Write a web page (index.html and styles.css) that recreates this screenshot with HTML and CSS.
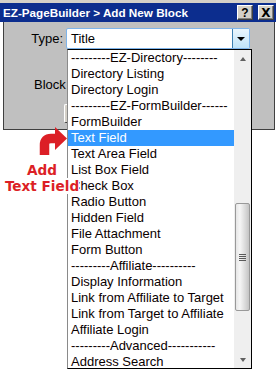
FILE: index.html
```html
<!DOCTYPE html>
<html>
<head>
<meta charset="utf-8">
<link rel="stylesheet" href="styles.css">
</head>
<body>
<div class="window">
  <div class="titlebar">
    <span class="title">EZ-PageBuilder &gt; Add New Block</span>
    <div class="tbtns">
      <span class="tbtn">?</span>
      <span class="tbtn close">X</span>
    </div>
  </div>
  <div class="panel">
    <div class="row">
      <span class="lbl">Type:</span>
      <div class="select"><span>Title</span><span class="dbtn"><span class="tri-down"></span></span></div>
    </div>
    <div class="row2"><span class="clip">Block Name:</span></div>
    <div class="pbtn"></div>
  </div>
</div>

<div class="list">
  <div class="items">
    <div class="item">---------EZ-Directory--------</div>
    <div class="item">Directory Listing</div>
    <div class="item">Directory Login</div>
    <div class="item">---------EZ-FormBuilder------</div>
    <div class="item">FormBuilder</div>
    <div class="item sel">Text Field</div>
    <div class="item">Text Area Field</div>
    <div class="item">List Box Field</div>
    <div class="item">Check Box</div>
    <div class="item">Radio Button</div>
    <div class="item">Hidden Field</div>
    <div class="item">File Attachment</div>
    <div class="item">Form Button</div>
    <div class="item">---------Affiliate----------</div>
    <div class="item">Display Information</div>
    <div class="item">Link from Affiliate to Target</div>
    <div class="item">Link from Target to Affiliate</div>
    <div class="item">Affiliate Login</div>
    <div class="item">---------Advanced-----------</div>
    <div class="item">Address Search</div>
  </div>
  <div class="scroll">
    <div class="sb-btn"><span class="tri-up"></span></div>
    <div class="sb-track">
      <div class="thumb"><span class="grip"></span></div>
    </div>
    <div class="sb-btn"><span class="tri-dn"></span></div>
  </div>
</div>

<svg class="arrow" width="70" height="45" viewBox="0 120 70 45">
  <path d="M44.5 155 V145 Q44.5 138.5 51 138.5 H56" fill="none" stroke="#dc1f26" stroke-width="9.5"/>
  <polygon points="55,127 67,138.5 55,150" fill="#dc1f26"/>
</svg>
<div class="annot"><span>Add</span><br><span class="bg">Text Field</span></div>
</body>
</html>
```

FILE: styles.css
```css
* { box-sizing: border-box; }
body {
  margin: 0;
  background: #fff;
  width: 278px;
  height: 375px;
  position: relative;
  overflow: hidden;
  font-family: "Liberation Sans", Arial, sans-serif;
  color: #000;
}
.window {
  width: 276px;
  border-top: 3px solid #d4d0c8;
}
.titlebar {
  height: 19px;
  background: #0c2d8e;
  display: flex;
  align-items: center;
  justify-content: space-between;
  padding: 0 2px 0 3px;
}
.title {
  color: #fff;
  font-weight: bold;
  font-size: 11.7px;
  white-space: nowrap;
}
.tbtns { display: flex; gap: 5px; }
.tbtn {
  width: 16px;
  height: 15px;
  background: #d4d0c8;
  border: 1px solid;
  border-color: #fff #404040 #404040 #fff;
  box-shadow: inset -1px -1px #808080;
  display: flex;
  align-items: center;
  justify-content: center;
  font: bold 12px "Liberation Sans", Arial, sans-serif;
  color: #000;
  line-height: 1;
}
.tbtn.close { font: bold 12px "DejaVu Sans", sans-serif; }
.panel {
  margin-left: 3px;
  width: 272px;
  height: 108px;
  background: #c0c0c0;
  border: 1px solid #404040;
  border-top: none;
  padding-top: 6px;
}
.row { display: flex; align-items: center; }
.lbl {
  width: 59px;
  text-align: right;
  font-size: 13px;
}
.select {
  margin-left: 3px;
  width: 184px;
  height: 21px;
  background: #fff;
  border: 1px solid #7eb4ea;
  border-radius: 2px;
  display: flex;
  align-items: center;
  justify-content: space-between;
  padding-left: 4px;
  font-size: 13px;
}
.dbtn {
  width: 17px;
  height: 19px;
  background: linear-gradient(#eaf6fd, #bfe3f8);
  border-left: 1px solid #3c7fb1;
  display: flex;
  align-items: center;
  justify-content: center;
}
.tri-down {
  width: 0; height: 0;
  border-left: 4px solid transparent;
  border-right: 4px solid transparent;
  border-top: 4px solid #000;
}
.row2 {
  margin-top: 28px;
  padding-left: 30px;
  font-size: 13px;
  line-height: 16px;
  height: 16px;
}
.row2 .clip {
  display: block;
  width: 33px;
  overflow: hidden;
  white-space: nowrap;
}
.pbtn {
  margin-top: 11px;
  margin-left: 60px;
  width: 80px;
  height: 19px;
  background: #d4d0c8;
  border: 1px solid;
  border-color: #fff #404040 #404040 #fff;
  border-radius: 2px;
}
.list {
  position: absolute;
  left: 67px;
  top: 49px;
  width: 185px;
  height: 320px;
  background: #fff;
  border: 1px solid #000;
  border-left-color: #8a8a8a;
  display: flex;
}
.items { width: 166px; overflow: hidden; }
.item {
  height: 16px;
  line-height: 16px;
  padding-left: 3px;
  font-size: 13px;
  white-space: nowrap;
  overflow: hidden;
  color: #0a0000;
}
.item.sel { background: #3399ff; color: #fff; }
.scroll {
  width: 17px;
  background: #efefef;
  display: flex;
  flex-direction: column;
}
.sb-btn {
  height: 17px;
  display: flex;
  align-items: center;
  justify-content: center;
}
.tri-up {
  width: 0; height: 0;
  border-left: 3.5px solid transparent;
  border-right: 3.5px solid transparent;
  border-bottom: 4px solid #606060;
}
.tri-dn {
  width: 0; height: 0;
  border-left: 3.5px solid transparent;
  border-right: 3.5px solid transparent;
  border-top: 4px solid #606060;
}
.sb-track { flex: 1; }
.thumb {
  margin: 136px 1px 0;
  height: 108px;
  border: 1px solid #999;
  border-radius: 2px;
  background: linear-gradient(to right, #e6e6e6, #f6f6f6 30%, #dadada 70%, #c4c4c4);
  display: flex;
  align-items: center;
  justify-content: center;
}
.grip {
  width: 7px;
  height: 7px;
  background: repeating-linear-gradient(#5a5a5a 0 1px, transparent 1px 2px);
}
.arrow {
  position: absolute;
  left: 0;
  top: 120px;
}
.annot {
  position: absolute;
  left: 2px;
  top: 162px;
  width: 80px;
  text-align: center;
  font: bold 13.6px/16px "DejaVu Sans", sans-serif;
  color: #dc1f26;
  white-space: nowrap;
}
.annot .bg { background: #fff; }
```
